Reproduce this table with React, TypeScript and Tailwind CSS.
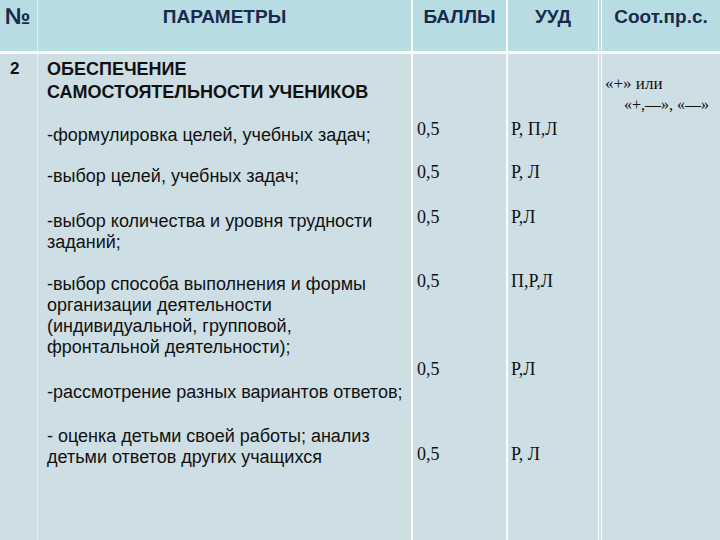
const sans = "font-['Liberation_Sans',Arial,sans-serif]";
const serif = "font-['Liberation_Serif','Times_New_Roman',serif]";

const items = [
  { lines: ["-формулировка целей, учебных задач;"], mt: "mt-[21px]" },
  { lines: ["-выбор целей, учебных задач;"], mt: "mt-[20px]" },
  { lines: ["-выбор количества и уровня трудности", "заданий;"], mt: "mt-[24px]" },
  {
    lines: [
      "-выбор способа выполнения и формы",
      "организации деятельности",
      "(индивидуальной, групповой,",
      "фронтальной деятельности);",
    ],
    mt: "mt-[21px]",
  },
  { lines: ["-рассмотрение разных вариантов ответов;"], mt: "mt-[24px]" },
  { lines: ["- оценка детьми своей работы; анализ", "детьми ответов других учащихся"], mt: "mt-[23px]" },
];

const scores = [
  { ball: "0,5", uud: "Р, П,Л", mt: "mt-[65px]" },
  { ball: "0,5", uud: "Р, Л", mt: "mt-[22px]" },
  { ball: "0,5", uud: "Р,Л", mt: "mt-[24px]" },
  { ball: "0,5", uud: "П,Р,Л", mt: "mt-[43px]" },
  { ball: "0,5", uud: "Р,Л", mt: "mt-[67px]" },
  { ball: "0,5", uud: "Р, Л", mt: "mt-[64px]" },
];

export default function App() {
  return (
    <div className={`w-[720px] h-[540px] overflow-hidden bg-[#cddee5] ${sans}`}>
      {/* Header */}
      <div className="flex h-[51px] bg-[#b7dce1] text-[#1a2a4f] font-bold text-[19px] leading-[22px]">
        <div className="w-[38px] shrink-0 border-r border-[#e3f0f2] pl-[5px] pt-[3px] text-[23px] leading-[26px]">№</div>
        <div className="w-[375px] shrink-0 border-r-2 border-white/90 pt-[6px] text-center">ПАРАМЕТРЫ</div>
        <div className="w-[95px] shrink-0 border-r-2 border-white/90 pt-[6px] text-center">БАЛЛЫ</div>
        <div className="w-[94px] shrink-0 border-r-4 border-double border-white/90 pt-[6px] text-center">УУД</div>
        <div className="flex-1 pt-[6px] text-center">Соот.пр.с.</div>
      </div>
      <div className="h-[3px] bg-white/90" />

      {/* Body */}
      <div className="flex h-[486px] text-[#111]">
        <div className="w-[38px] shrink-0 border-r border-[#e3f0f2] pl-[10px] pt-[5px] text-[17px] leading-[20px] font-bold">
          2
        </div>

        <div className="w-[375px] shrink-0 border-r-2 border-white/90 pl-[9px] pt-[4px]">
          <div className="font-bold text-[18px] leading-[23px]">
            <div>ОБЕСПЕЧЕНИЕ</div>
            <div>САМОСТОЯТЕЛЬНОСТИ УЧЕНИКОВ</div>
          </div>
          {items.map((it, i) => (
            <div key={i} className={`${it.mt} text-[18px] leading-[21px] whitespace-nowrap`}>
              {it.lines.map((l, j) => (
                <div key={j}>{l}</div>
              ))}
            </div>
          ))}
        </div>

        <div className={`w-[95px] shrink-0 border-r-2 border-white/90 pl-[4px] ${serif} text-[18px] leading-[21px]`}>
          {scores.map((s, i) => (
            <div key={i} className={s.mt}>{s.ball}</div>
          ))}
        </div>

        <div className={`w-[94px] shrink-0 border-r-4 border-double border-white/90 pl-[3px] ${serif} text-[18px] leading-[21px]`}>
          {scores.map((s, i) => (
            <div key={i} className={s.mt}>{s.uud}</div>
          ))}
        </div>

        <div className={`flex-1 pl-[3px] pt-[19px] ${serif} leading-[21px] whitespace-nowrap`}>
          <div className="text-[17px]">«+» или</div>
          <div className="pl-[19px] text-[16px]">«+,—», «—»</div>
        </div>
      </div>
    </div>
  );
}
